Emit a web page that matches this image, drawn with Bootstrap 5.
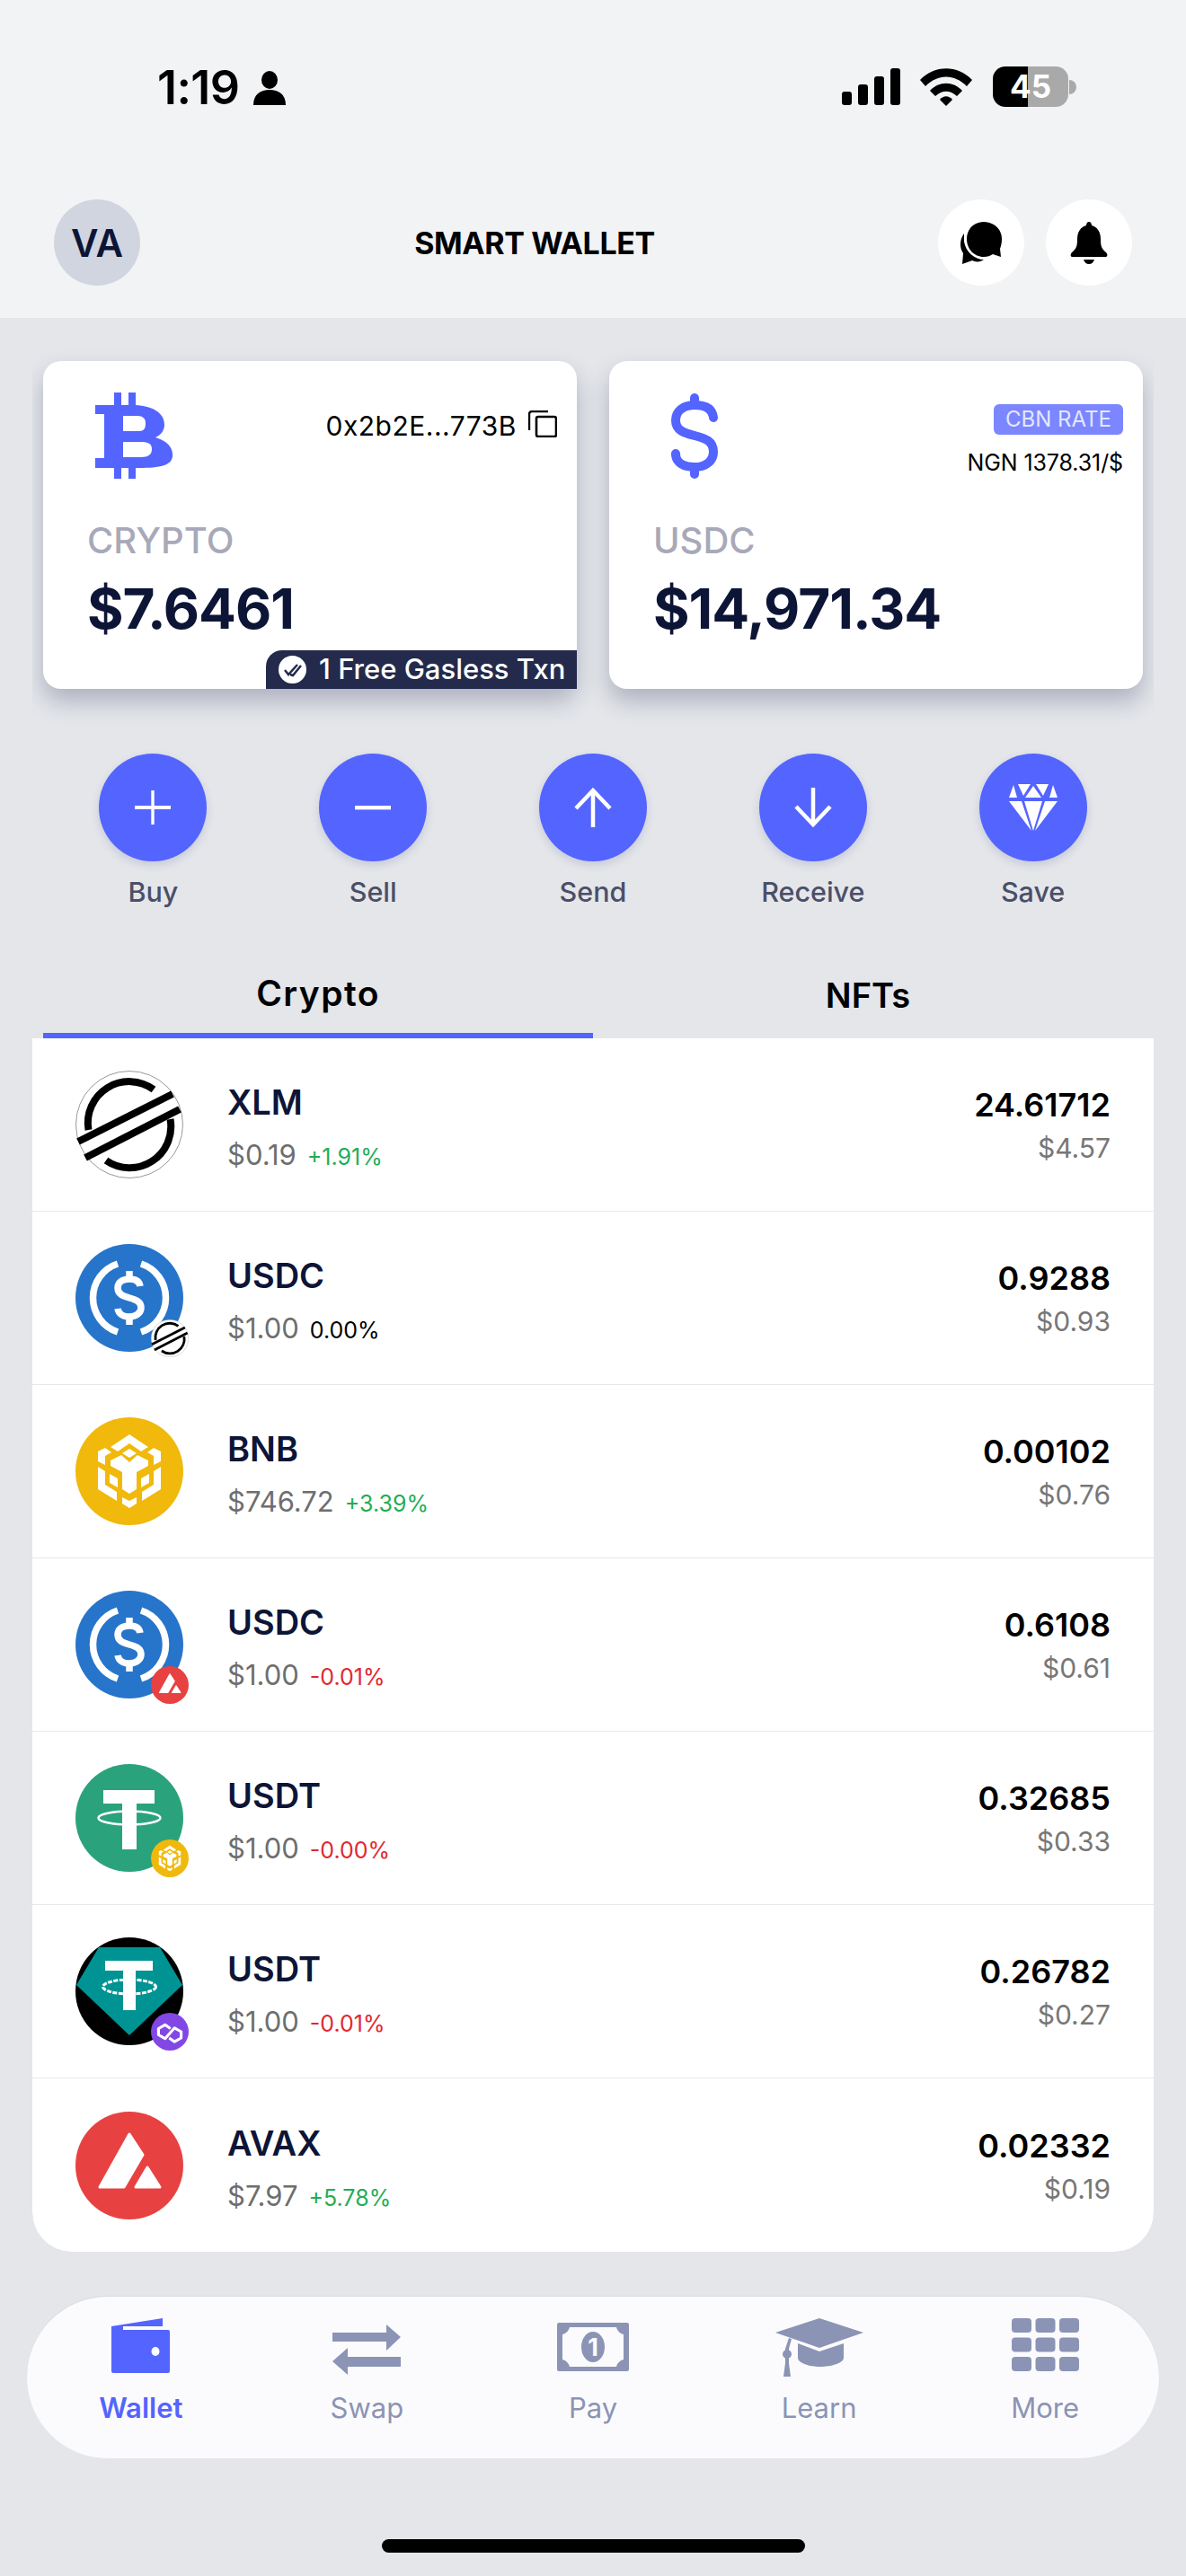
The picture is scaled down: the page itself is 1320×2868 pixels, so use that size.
<!DOCTYPE html>
<html lang="en">
<head>
<meta charset="UTF-8">
<meta name="viewport" content="width=device-width, initial-scale=1.0">
<title>Smart Wallet</title>
<link href="https://cdn.jsdelivr.net/npm/bootstrap@5.3.0/dist/css/bootstrap.min.css" rel="stylesheet">
<style>
body {
  font-family: Inter, "Liberation Sans", sans-serif;
  background-color: #e4e6ea;
  color: #0d1537;
  width: 1320px;
  height: 2868px;
  overflow: hidden;
}
.top-block { background: #f2f3f5; height: 354px; padding: 0 60px; }
.status-bar { height: 222px; padding: 70px 62px 0 115px; }
.clock { font-size: 52px; font-weight: 600; line-height: 56px; color: #000; letter-spacing: -.6px; }
.person-ic { margin-left: 16px; }
.status-right { margin-top: 4px; }
.wifi-ic { margin-left: 22px; }
.batt { width: 84px; height: 45px; margin-left: 23px; border-radius: 14px; background: linear-gradient(90deg, #000 46%, #a9a9a9 46%); color: #fff; font-size: 35px; font-weight: 700; line-height: 45px; text-align: center; }
.batt-nub { width: 8px; height: 16px; background: #a9a9a9; border-radius: 0 8px 8px 0; margin-left: 1px; }
.head-row { height: 96px; }
.avatar-va { width: 96px; height: 96px; background: #d0d5df; font-size: 42px; font-weight: 600; }
.head-title { font-size: 34px; font-weight: 700; color: #000; margin-right: 10px; letter-spacing: -.4px; }
.head-btn { width: 96px; height: 96px; background: #fff; }
.head-btns { gap: 24px; }

.cards-clip { margin: 0 36px; padding: 48px 12px 45px; overflow: hidden; gap: 36px; }
.bal-card { width: 594px; height: 365px; border: 0; border-radius: 20px; box-shadow: 0 14px 26px rgba(35, 40, 80, .27); padding: 35px 22px 0 49px; color: #0d1537; }
.coin-icon { height: 100px; }
.btc-ic { margin-left: 8px; }
.usd-ic { margin-left: 18px; }
.addr { font-size: 30px; line-height: 34px; color: #000; margin-top: 20px; letter-spacing: .5px; }
.copy-ic { margin-left: 13px; margin-top: 16px; flex: none; }
.rate-pill { background: #7b86ff; color: #e4e7ff; font-size: 24px; font-weight: 400; border-radius: 6px; padding: 0 13px; line-height: 34px; height: 34px; margin-top: 13px; }
.rate-val { font-size: 25px; line-height: 28px; color: #000; margin-top: 17px; letter-spacing: -.1px; }
.bal-label { font-size: 40px; line-height: 46px; color: #a8a9b8; font-weight: 500; margin-top: 42px; }
.bal-amount { font-size: 62px; line-height: 76px; font-weight: 700; margin-top: 15px; letter-spacing: -1px; }
.gas-tag { position: absolute; right: 0; bottom: 0; width: 346px; height: 43px; background: #232a4c; color: #fff; font-size: 31px; font-weight: 500; border-radius: 18px 0 0 0; padding-left: 14px; gap: 14px; white-space: nowrap; }

.action-row { margin: 27px 48px 0; }
.action-item { width: 20%; }
.action-btn { width: 120px; height: 120px; background: #5464ff; box-shadow: 0 4px 10px rgba(60, 70, 140, .18); }
.action-label { font-size: 30.5px; line-height: 36px; margin-top: 16px; color: #4a4f68; font-weight: 500; }

.tab-row { margin: 59px 48px 0; }
.tab-item { width: 50%; text-align: center; font-size: 38px; line-height: 48px; font-weight: 600; color: #000; padding: 14px 0 18px; border-bottom: 6px solid transparent; }
.tab-item.active { border-bottom-color: #5464ff; font-size: 39px; font-weight: 600; letter-spacing: 1.4px; padding: 12px 0 20px; }

.coin-list { margin: 0 36px; border-radius: 0 0 44px 44px; overflow: hidden; }
.coin-list .list-group-item { padding: 36px 48px; border: 0; border-bottom: 1px solid #e8e8ea; height: 193px; }
.coin-list .list-group-item:last-child { border-bottom: 0; height: 193px; }
.coin-wrap { position: relative; width: 120px; height: 120px; flex: none; margin-right: 49px; }
.coin-wrap svg.main-logo { display: block; width: 120px; height: 120px; }
.chain-dot { position: absolute; right: -6px; bottom: -6px; width: 42px; height: 42px; }
.coin-text { margin-top: 10px; }
.coin-name { font-size: 38px; line-height: 48px; font-weight: 600; color: #0d1537; }
.coin-sub { line-height: 40px; margin-top: 15px; }
.coin-price { font-size: 31px; color: #6e6e6e; margin-right: 12px; }
.coin-change { font-size: 25px; }
.up { color: #1fae54; }
.down { color: #e2282e; }
.flat { color: #000; }
.coin-amount { font-size: 36px; line-height: 40px; font-weight: 600; color: #000; }
.coin-usd { font-size: 30px; line-height: 40px; margin-top: 8px; color: #777; }
.coin-vals { margin-top: 4px; }

.tab-dock { margin: 50px 30px 0; height: 180px; background: #fbfbfd; border-radius: 90px; padding: 0 1px; box-shadow: 0 -1px 1px rgba(0, 0, 0, .05); }
.dock-item { width: 20%; color: #8b94b5; font-size: 31px; }
.dock-item.active { color: #5464ff; font-weight: 600; }
.dock-icon { height: 66px; margin-top: 24px; }
.swap-ic { margin-top: 7px; }
.pay-ic { margin-top: 5px; }
.pay-num { font-family: Inter, sans-serif; font-size: 27px; font-weight: 700; fill: #fbfbfd; }
.dock-label { line-height: 36px; margin-top: 16px; }
.home-bar { width: 471px; height: 15px; background: #000; border-radius: 8px; margin: 90px auto 0; }
</style>
</head>
<body>
<svg width="0" height="0" class="position-absolute">
  <defs>
    <symbol id="bnb" viewBox="0 0 120 120">
      <g fill="#fff">
        <polygon points="39,33 60,19 81,33 73,38 60,29 47,38"/>
        <polygon points="52,40 60,35 68,40 60,45"/>
        <polygon points="25,38 33,34 40,39 33,43 33,53 25,49"/>
        <polygon points="95,38 87,34 80,39 87,43 87,53 95,49"/>
        <polygon points="39,48 51,42 60,50 69,42 81,48 81,54 68,61 68,80 60,85 52,80 52,61 39,54"/>
        <polygon points="25,55 33,60 33,75 46,83 46,93 25,80"/>
        <polygon points="95,55 87,60 87,75 74,83 74,93 95,80"/>
        <polygon points="38,63 47,68 47,78 38,73"/>
        <polygon points="82,63 73,68 73,78 82,73"/>
        <polygon points="52,89 60,93 68,89 68,96 60,101 52,96"/>
      </g>
    </symbol>
    <symbol id="usdc" viewBox="0 0 120 120">
      <circle cx="60" cy="60" r="60" fill="#2775ca"/>
      <g fill="none" stroke="#fff">
        <path d="M47 22 A40 40 0 0 0 47 98" stroke-width="7.5"/>
        <path d="M73 22 A40 40 0 0 1 73 98" stroke-width="7.5"/>
        <path d="M72 47 C71 41 66 39 60 39 C52 39 47 43 47 49 C47 56 53 58 60 60 C67 62 73 64 73 71 C73 77 67 81 60 81 C53 81 48 78 47 72" stroke-width="7.5"/>
        <path d="M60 30 V39 M60 81 V90" stroke-width="7.5"/>
      </g>
    </symbol>
    <symbol id="avax" viewBox="0 0 120 120">
      <circle cx="60" cy="60" r="60" fill="#e84142"/>
      <g fill="#fff" stroke="#fff" stroke-width="3" stroke-linejoin="round">
        <polygon points="60,25 75,48 54,84 27,84"/>
        <polygon points="80,62 94,84 67,84"/>
      </g>
    </symbol>
    <symbol id="stellar" viewBox="0 0 120 120">
      <circle cx="60" cy="60" r="59.5" fill="#fff" stroke="#999" stroke-width="1"/>
      <g fill="none" stroke="#000" stroke-width="8">
        <path d="M87 21 A46 46 0 0 0 14.5 66"/>
        <path d="M34 100 A46 46 0 0 0 105.5 54"/>
        <path d="M3 79 L108 26"/>
        <path d="M11 97 L116 43"/>
      </g>
    </symbol>
  </defs>
</svg>

<div class="top-block">
  <div class="status-bar d-flex align-items-start justify-content-between">
    <div class="d-flex align-items-center">
      <span class="clock">1:19</span>
      <svg class="person-ic" width="36" height="38" viewBox="0 0 36 38"><ellipse cx="18" cy="10" rx="9" ry="10"/><path d="M0 38 C0 26 8 21 18 21 C28 21 36 26 36 38 Z"/></svg>
    </div>
    <div class="status-right d-flex align-items-center">
      <svg width="65" height="41" viewBox="0 0 65 41"><rect x="0" y="26" width="11" height="15" rx="3"/><rect x="18" y="18" width="11" height="23" rx="3"/><rect x="36" y="9" width="11" height="32" rx="3"/><rect x="54" y="0" width="11" height="41" rx="3"/></svg>
      <svg class="wifi-ic" width="58" height="42" viewBox="0 0 58 42"><path d="M0 13 C16 -4 42 -4 58 13 L52 20 C38 6 20 6 6 20 Z"/><path d="M11 25 C21 14 37 14 47 25 L41 31 C33 24 25 24 17 31 Z"/><path d="M22 35 C26 30 32 30 36 35 L29 42 Z"/></svg>
      <div class="batt">45</div>
      <div class="batt-nub"></div>
    </div>
  </div>
  <div class="head-row d-flex align-items-center justify-content-between">
    <div class="avatar-va rounded-circle d-flex align-items-center justify-content-center">VA</div>
    <div class="head-title">SMART WALLET</div>
    <div class="head-btns d-flex">
      <div class="head-btn rounded-circle d-flex align-items-center justify-content-center">
        <svg width="46" height="47" viewBox="0 0 46 47"><path d="M26 0 C37 0 46 8 46 19 C46 24 45 27 44 30 L45 39 L36 36 C33 38 30 39 26 39 C15 39 7 30 7 19 C7 8 15 0 26 0 Z"/><path d="M4 13 C1 17 0 21 0 25 C0 29 1 32 3 35 L2 47 L13 43 C17 45 22 45 26 42 C16 42 6 34 4 22 C4 18 4 15 4 13 Z"/></svg>
      </div>
      <div class="head-btn rounded-circle d-flex align-items-center justify-content-center">
        <svg width="42" height="47" viewBox="0 0 42 47"><path d="M21 0 C23 0 24 2 24 4 C31 6 34 12 34 19 C34 27 35 30 40 34 C42 36 42 39 39 39 H3 C0 39 0 36 2 34 C7 30 8 27 8 19 C8 12 11 6 18 4 C18 2 19 0 21 0 Z"/><path d="M15 42 H27 C26 45 24 47 21 47 C18 47 16 45 15 42 Z"/></svg>
      </div>
    </div>
  </div>
</div>

<div class="cards-clip d-flex">
  <div class="card bal-card position-relative">
    <div class="coin-icon d-flex justify-content-between align-items-start">
      <svg class="btc-ic" width="88" height="96" viewBox="0 0 88 96"><path fill="#5464ff" d="M22 0 H30 V14 H38 V0 H46 V14 C64 15 78 22 78 36 C78 43 73 48 68 50 C78 53 88 59 87 71 C86 83 68 84 46 84 V96 H38 V84 H30 V96 H22 V84 H1 V73 H11 V24 H1 V14 H22 Z M32 26 V43 H50 C56 43 57 39 57 34 C57 29 54 26 48 26 Z M32 55 V72 H52 C60 72 64 69 64 63 C64 57 60 55 52 55 Z"/></svg>
      <div class="d-flex align-items-center">
        <div class="addr">0x2b2E...773B</div>
        <svg class="copy-ic" width="32" height="30" viewBox="0 0 32 30"><path d="M22 1 H4 A3 3 0 0 0 1 4 V22" fill="none" stroke="#000" stroke-width="2.4"/><rect x="9" y="7" width="22" height="22" rx="2" fill="none" stroke="#000" stroke-width="2.6"/></svg>
      </div>
    </div>
    <div class="bal-label">CRYPTO</div>
    <div class="bal-amount">$7.6461</div>
    <div class="gas-tag d-flex align-items-center">
      <svg width="31" height="31" viewBox="0 0 31 31"><circle cx="15.5" cy="15.5" r="15.5" fill="#fff"/><path d="M7 16 L11 21 L21 10 M13 21 L16 22 L25 11" fill="none" stroke="#232a4c" stroke-width="2.5"/></svg>
      <span>1 Free Gasless Txn</span>
    </div>
  </div>
  <div class="card bal-card">
    <div class="coin-icon d-flex justify-content-between align-items-start">
      <svg class="usd-ic" width="56" height="97" viewBox="0 0 56 97"><g fill="none" stroke="#5464ff" stroke-linecap="round"><path stroke-width="10" d="M49 28 C48 18 40 14 28 14 C15 14 7 21 7 31 C7 42 16 45 28 48 C40 51 49 54 49 66 C49 76 41 83 28 83 C16 83 7 78 7 68"/><path stroke-width="10" d="M28 6 V14 M28 83 V91"/></g></svg>
      <div class="text-end">
        <div class="badge rate-pill">CBN RATE</div>
        <div class="rate-val">NGN 1378.31/$</div>
      </div>
    </div>
    <div class="bal-label">USDC</div>
    <div class="bal-amount">$14,971.34</div>
  </div>
</div>

<div class="action-row d-flex">
  <div class="action-item d-flex flex-column align-items-center">
    <div class="action-btn rounded-circle d-flex align-items-center justify-content-center"><svg width="40" height="40" viewBox="0 0 40 40" fill="#fff"><rect x="0" y="18" width="40" height="4"/><rect x="18.3" y="1" width="3.4" height="38"/></svg></div>
    <div class="action-label">Buy</div>
  </div>
  <div class="action-item d-flex flex-column align-items-center">
    <div class="action-btn rounded-circle d-flex align-items-center justify-content-center"><svg width="40" height="40" viewBox="0 0 40 40" fill="#fff"><rect x="0" y="18" width="40" height="4.4"/></svg></div>
    <div class="action-label">Sell</div>
  </div>
  <div class="action-item d-flex flex-column align-items-center">
    <div class="action-btn rounded-circle d-flex align-items-center justify-content-center"><svg width="42" height="44" viewBox="0 0 42 44" fill="none" stroke="#fff" stroke-width="4.5"><path d="M21 44 V3"/><path d="M2 23 L21 3 L40 23"/></svg></div>
    <div class="action-label">Send</div>
  </div>
  <div class="action-item d-flex flex-column align-items-center">
    <div class="action-btn rounded-circle d-flex align-items-center justify-content-center"><svg width="42" height="44" viewBox="0 0 42 44" fill="none" stroke="#fff" stroke-width="4.5"><path d="M21 0 V41"/><path d="M2 21 L21 41 L40 21"/></svg></div>
    <div class="action-label">Receive</div>
  </div>
  <div class="action-item d-flex flex-column align-items-center">
    <div class="action-btn rounded-circle d-flex align-items-center justify-content-center"><svg width="54" height="52" viewBox="0 0 54 52" fill="#fff"><polygon points="0,15 5,1 9,15"/><polygon points="10,0 24,0 16,13"/><polygon points="18,15 27,2 36,15"/><polygon points="30,0 44,0 38,13"/><polygon points="45,15 49,1 54,15"/><polygon points="0,19 14,19 25,52"/><polygon points="17,19 37,19 27,52"/><polygon points="40,19 54,19 29,52"/></svg></div>
    <div class="action-label">Save</div>
  </div>
</div>

<div class="tab-row d-flex">
  <div class="tab-item active">Crypto</div>
  <div class="tab-item">NFTs</div>
</div>

<div class="list-group list-group-flush coin-list">
  <div class="list-group-item d-flex align-items-center">
    <div class="coin-wrap"><svg class="main-logo"><use href="#stellar"/></svg></div>
    <div class="coin-text flex-grow-1"><div class="coin-name">XLM</div><div class="coin-sub"><span class="coin-price">$0.19</span><span class="coin-change up">+1.91%</span></div></div>
    <div class="coin-vals text-end"><div class="coin-amount">24.61712</div><div class="coin-usd">$4.57</div></div>
  </div>
  <div class="list-group-item d-flex align-items-center">
    <div class="coin-wrap"><svg class="main-logo"><use href="#usdc"/></svg>
      <svg class="chain-dot" viewBox="0 0 120 120"><use href="#stellar"/></svg></div>
    <div class="coin-text flex-grow-1"><div class="coin-name">USDC</div><div class="coin-sub"><span class="coin-price">$1.00</span><span class="coin-change flat">0.00%</span></div></div>
    <div class="coin-vals text-end"><div class="coin-amount">0.9288</div><div class="coin-usd">$0.93</div></div>
  </div>
  <div class="list-group-item d-flex align-items-center">
    <div class="coin-wrap"><svg class="main-logo" viewBox="0 0 120 120"><circle cx="60" cy="60" r="60" fill="#f0b90b"/><use href="#bnb" width="120" height="120"/></svg></div>
    <div class="coin-text flex-grow-1"><div class="coin-name">BNB</div><div class="coin-sub"><span class="coin-price">$746.72</span><span class="coin-change up">+3.39%</span></div></div>
    <div class="coin-vals text-end"><div class="coin-amount">0.00102</div><div class="coin-usd">$0.76</div></div>
  </div>
  <div class="list-group-item d-flex align-items-center">
    <div class="coin-wrap"><svg class="main-logo"><use href="#usdc"/></svg>
      <svg class="chain-dot" viewBox="0 0 120 120"><use href="#avax"/></svg></div>
    <div class="coin-text flex-grow-1"><div class="coin-name">USDC</div><div class="coin-sub"><span class="coin-price">$1.00</span><span class="coin-change down">-0.01%</span></div></div>
    <div class="coin-vals text-end"><div class="coin-amount">0.6108</div><div class="coin-usd">$0.61</div></div>
  </div>
  <div class="list-group-item d-flex align-items-center">
    <div class="coin-wrap"><svg class="main-logo" viewBox="0 0 120 120"><circle cx="60" cy="60" r="60" fill="#2aa37d"/><path fill="#fff" d="M31 29 H88 V44 H68 V95 H52 V44 H31 Z"/><ellipse cx="60" cy="60" rx="34.5" ry="7.5" fill="none" stroke="#fff" stroke-width="2.5"/></svg>
      <svg class="chain-dot" viewBox="0 0 120 120"><circle cx="60" cy="60" r="60" fill="#f0b90b"/><use href="#bnb" width="120" height="120"/></svg></div>
    <div class="coin-text flex-grow-1"><div class="coin-name">USDT</div><div class="coin-sub"><span class="coin-price">$1.00</span><span class="coin-change down">-0.00%</span></div></div>
    <div class="coin-vals text-end"><div class="coin-amount">0.32685</div><div class="coin-usd">$0.33</div></div>
  </div>
  <div class="list-group-item d-flex align-items-center">
    <div class="coin-wrap"><svg class="main-logo" viewBox="0 0 120 120"><circle cx="60" cy="60" r="60" fill="#000"/><polygon points="26,11 94,11 119,53 60,109 1,53" fill="#009393"/><path fill="#fff" d="M33 26 H86 V37 H67 V81 H53 V37 H33 Z"/><ellipse cx="60" cy="55" rx="29.5" ry="8" fill="none" stroke="#fff" stroke-width="3" stroke-dasharray="5 1.5"/></svg>
      <svg class="chain-dot" viewBox="0 0 120 120"><circle cx="60" cy="60" r="60" fill="#8247e5"/><path d="M62 50 L45 38 L24 50 V70 L45 82 L75 48 L96 60 V80 L75 92 L58 80" fill="none" stroke="#fff" stroke-width="9" stroke-linejoin="round"/></svg></div>
    <div class="coin-text flex-grow-1"><div class="coin-name">USDT</div><div class="coin-sub"><span class="coin-price">$1.00</span><span class="coin-change down">-0.01%</span></div></div>
    <div class="coin-vals text-end"><div class="coin-amount">0.26782</div><div class="coin-usd">$0.27</div></div>
  </div>
  <div class="list-group-item d-flex align-items-center">
    <div class="coin-wrap"><svg class="main-logo"><use href="#avax"/></svg></div>
    <div class="coin-text flex-grow-1"><div class="coin-name">AVAX</div><div class="coin-sub"><span class="coin-price">$7.97</span><span class="coin-change up">+5.78%</span></div></div>
    <div class="coin-vals text-end"><div class="coin-amount">0.02332</div><div class="coin-usd">$0.19</div></div>
  </div>
</div>

<div class="tab-dock d-flex">
  <div class="dock-item active d-flex flex-column align-items-center">
    <div class="dock-icon"><svg width="65" height="61" viewBox="0 0 65 61" fill="#5464ff"><path d="M0 9 L57 0 V9 H13 V13 H63 A2 2 0 0 1 65 15 V59 A2 2 0 0 1 63 61 H2 A2 2 0 0 1 0 59 Z"/><ellipse cx="49" cy="37" rx="4.5" ry="5" fill="#fff"/></svg></div>
    <div class="dock-label">Wallet</div>
  </div>
  <div class="dock-item d-flex flex-column align-items-center">
    <div class="dock-icon"><svg class="swap-ic" width="76" height="56" viewBox="0 0 76 56" fill="#8b94b5"><polygon points="0,9 60,9 60,0 76,14 60,29 60,19 0,19"/><polygon points="76,36 17,36 17,26 0,41 17,56 17,47 76,47"/></svg></div>
    <div class="dock-label">Swap</div>
  </div>
  <div class="dock-item d-flex flex-column align-items-center">
    <div class="dock-icon"><svg class="pay-ic" width="80" height="54" viewBox="0 0 80 54"><rect width="80" height="54" rx="2" fill="#8b94b5"/><path d="M14 5 H66 C67 9 70 12 74 13 V41 C70 42 67 45 66 49 H14 C13 45 10 42 6 41 V13 C10 12 13 9 14 5 Z" fill="#fbfbfd"/><ellipse cx="40" cy="27" rx="13" ry="17" fill="#8b94b5"/><text x="40" y="37" text-anchor="middle" class="pay-num">1</text></svg></div>
    <div class="dock-label">Pay</div>
  </div>
  <div class="dock-item d-flex flex-column align-items-center">
    <div class="dock-icon"><svg width="98" height="65" viewBox="0 0 98 65" fill="#8b94b5"><polygon points="49,0 98,16 49,33 0,16"/><path d="M25 28 L49 37 L76 28 V44 C76 50 62 54 50 54 C38 54 25 50 25 44 Z"/><path d="M15 22 L11 34 V50 L9 65 H17 L15 50 V34 L18 23 Z"/><ellipse cx="13" cy="40" rx="5" ry="5"/></svg></div>
    <div class="dock-label">Learn</div>
  </div>
  <div class="dock-item d-flex flex-column align-items-center">
    <div class="dock-icon"><svg width="75" height="60" viewBox="0 0 75 60" fill="#8b94b5"><rect x="0" width="22" height="16" rx="4"/><rect x="26.5" width="22" height="16" rx="4"/><rect x="53" width="22" height="16" rx="4"/><rect x="0" y="21.5" width="22" height="16" rx="4"/><rect x="26.5" y="21.5" width="22" height="16" rx="4"/><rect x="53" y="21.5" width="22" height="16" rx="4"/><rect x="0" y="43" width="22" height="16" rx="4"/><rect x="26.5" y="43" width="22" height="16" rx="4"/><rect x="53" y="43" width="22" height="16" rx="4"/></svg></div>
    <div class="dock-label">More</div>
  </div>
</div>
<div class="home-bar"></div>
</body>
</html>
